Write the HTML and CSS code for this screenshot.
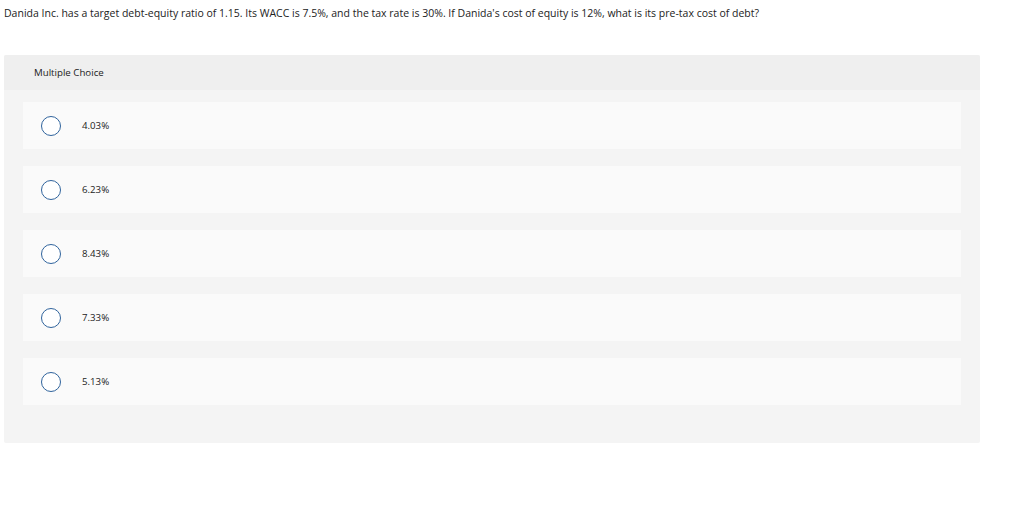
FILE: index.html
```html
<!DOCTYPE html>
<html>
<head>
<meta charset="utf-8">
<link rel="stylesheet" href="styles.css">
</head>
<body>
<div class="page">
  <p class="question">Danida Inc. has a target debt-equity ratio of 1.15. Its WACC is 7.5%, and the tax rate is 30%. If Danida's cost of equity is 12%, what is its pre-tax cost of debt?</p>
  <div class="panel">
    <div class="panel-head">Multiple Choice</div>
    <div class="panel-body">
      <div class="option"><span class="radio"></span><span class="label">4.03%</span></div>
      <div class="option"><span class="radio"></span><span class="label">6.23%</span></div>
      <div class="option"><span class="radio"></span><span class="label">8.43%</span></div>
      <div class="option"><span class="radio"></span><span class="label">7.33%</span></div>
      <div class="option"><span class="radio"></span><span class="label">5.13%</span></div>
    </div>
  </div>
</div>
</body>
</html>
```
FILE: styles.css
```css
html, body {
  margin: 0;
  padding: 0;
  background: #ffffff;
}
body {
  font-family: "Open Sans", "Liberation Sans", sans-serif;
  color: #222222;
}
.page {
  padding: 0 0 0 4px;
  width: 976px;
}
.question {
  margin: 0;
  padding-top: 6px;
  font-size: 10.5px;
  line-height: 14px;
  height: 49px;
}
.panel {
  background: #f4f4f4;
  border-radius: 2px;
  overflow: hidden;
}
.panel-head {
  background: #efefef;
  height: 35px;
  display: flex;
  align-items: center;
  padding-left: 30px;
  font-size: 9.7px;
}
.panel-body {
  padding: 12px 19px 38px 19px;
  display: flex;
  flex-direction: column;
  gap: 17px;
}
.option {
  background: #fafafa;
  height: 47px;
  display: flex;
  align-items: center;
  padding-left: 18px;
}
.radio {
  width: 18px;
  height: 18px;
  border: 1px solid #2f639c;
  border-radius: 50%;
  background: #ffffff;
  flex: none;
}
.label {
  margin-left: 21px;
  font-size: 9.7px;
}
```
